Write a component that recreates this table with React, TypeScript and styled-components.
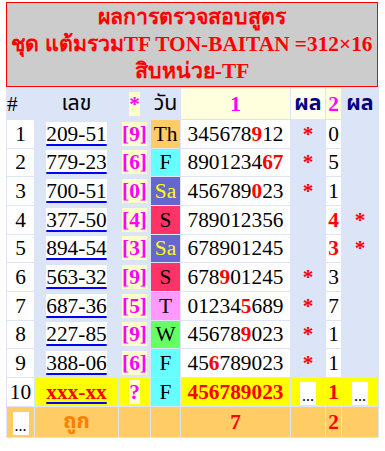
import styled, { createGlobalStyle } from "styled-components";

const GlobalStyle = createGlobalStyle`
  html, body {
    margin: 0;
    padding: 0;
    background: #ffffff;
  }
  body {
    font-family: "Liberation Serif", "Times New Roman", serif;
  }
`

const Page = styled.div`
  width: 373px;
  padding: 2px 0 0 6px;
`

const TitleBox = styled.div`
  border: 1px solid #ff0000;
  background: #cccccc;
  width: 370px;
  height: 82px;
  padding-top: 1px;
  box-sizing: content-box;
  display: flex;
  flex-direction: column;
  align-items: center;
`

const TitleLine = styled.div`
  color: #ff0000;
  font-weight: bold;
  font-size: 21.33px;
  line-height: 27px;
  white-space: nowrap;
`

const Table = styled.table`
  width: 373px;
  table-layout: fixed;
  border-collapse: separate;
  border-spacing: 1px;
  background: #dce4f8;
  font-size: 21.33px;
  line-height: 24px;
  margin-top: 0;

  td, th {
    padding: 0;
    text-align: center;
    vertical-align: middle;
    overflow: hidden;
    white-space: nowrap;
    line-height: 24px;
  }
`

const HeadRow = styled.tr`
  height: 31px;
`

const Row = styled.tr<{ $h?: number }>`
  height: ${p => p.$h ?? 27.67}px;
`

const Th = styled.th<{ $bg?: string; $color?: string; $bold?: boolean; $left?: boolean }>`
  background: ${p => p.$bg ?? "transparent"};
  color: ${p => p.$color ?? "#000"};
  font-weight: ${p => (p.$bold ? "bold" : "normal")};
  text-align: ${p => (p.$left ? "left" : "center")} !important;
  font-size: 21.33px;
`

const Td = styled.td<{ $bg?: string; $color?: string; $bold?: boolean }>`
  background: ${p => p.$bg ?? "transparent"};
  color: ${p => p.$color ?? "#000"};
  font-weight: ${p => (p.$bold ? "bold" : "normal")};
`

const NumLink = styled.span<{ $hot?: boolean }>`
  background: ${p => (p.$hot ? "transparent" : "#ffffff")};
  color: ${p => (p.$hot ? "#ff0000" : "#000")};
  font-weight: ${p => (p.$hot ? "bold" : "normal")};
  text-decoration: underline;
  text-decoration-color: #0000ff;
  text-decoration-thickness: 2px;
  text-underline-offset: 3px;
`

const Pick = styled.span`
  background: #ffffcc;
  color: #ff00ff;
  font-weight: bold;
`

const Hit = styled.b`
  color: #ff0000;
`

const Star = styled.span`
  color: #ff0000;
  font-weight: bold;
`

const Dots = styled.span`
  display: inline-block;
  background: #ffffff;
  color: #000;
  width: 16px;
  height: 23px;
  line-height: 28px;
  font-size: 16px;
  vertical-align: middle;
  overflow: hidden;
`

const Thai = styled.span<{ $color?: string }>`
  font-family: "Tahoma", "Noto Sans Thai", "DejaVu Sans", sans-serif;
  color: ${p => p.$color ?? "inherit"};
  line-height: 24px;
`

const days: Record<string, { bg: string; fg: string }> = {
  Th: { bg: "#ffcc66", fg: "#000" },
  F: { bg: "#66ffff", fg: "#000" },
  Sa: { bg: "#6666cc", fg: "#ffff00" },
  S: { bg: "#ff3366", fg: "#000" },
  T: { bg: "#ff99ff", fg: "#000" },
  W: { bg: "#66ff66", fg: "#000" },
}

type Item = {
  num: string
  pick: string
  day: string
  digits: [string, string, string]
  star: boolean
  second: string
  secondHot: boolean
}

const rows: Item[] = [
  { num: "209-51", pick: "[9]", day: "Th", digits: ["345678", "9", "12"], star: true, second: "0", secondHot: false },
  { num: "779-23", pick: "[6]", day: "F", digits: ["8901234", "67", ""], star: true, second: "5", secondHot: false },
  { num: "700-51", pick: "[0]", day: "Sa", digits: ["456789", "0", "23"], star: true, second: "1", secondHot: false },
  { num: "377-50", pick: "[4]", day: "S", digits: ["789012356", "", ""], star: false, second: "4", secondHot: true },
  { num: "894-54", pick: "[3]", day: "Sa", digits: ["678901245", "", ""], star: false, second: "3", secondHot: true },
  { num: "563-32", pick: "[9]", day: "S", digits: ["678", "9", "01245"], star: true, second: "3", secondHot: false },
  { num: "687-36", pick: "[5]", day: "T", digits: ["01234", "5", "689"], star: true, second: "7", secondHot: false },
  { num: "227-85", pick: "[9]", day: "W", digits: ["45678", "9", "023"], star: true, second: "1", secondHot: false },
  { num: "388-06", pick: "[6]", day: "F", digits: ["45", "6", "789023"], star: true, second: "1", secondHot: false },
]

export default function App() {
  return (
    <>
      <GlobalStyle />
      <Page>
        <TitleBox>
          <TitleLine>ผลการตรวจสอบสูตร</TitleLine>
          <TitleLine>ชุด แต้มรวมTF TON-BAITAN =312×16</TitleLine>
          <TitleLine>สิบหน่วย-TF</TitleLine>
        </TitleBox>
        <Table>
          <colgroup>
            <col style={{ width: 27 }} />
            <col style={{ width: 83 }} />
            <col style={{ width: 31 }} />
            <col style={{ width: 29 }} />
            <col style={{ width: 109 }} />
            <col style={{ width: 34 }} />
            <col style={{ width: 15 }} />
            <col style={{ width: 36 }} />
          </colgroup>
          <thead>
            <HeadRow>
              <Th $left>#</Th>
              <Th><Thai>เลข</Thai></Th>
              <Th><Pick>*</Pick></Th>
              <Th><Thai>วัน</Thai></Th>
              <Th $bg="#ffffdd" $color="#ff00ff" $bold>1</Th>
              <Th $bg="#ffffee" $color="#000080" $bold><Thai>ผล</Thai></Th>
              <Th $bg="#ffffdd" $color="#ff00ff" $bold>2</Th>
              <Th $color="#000080" $bold><Thai>ผล</Thai></Th>
            </HeadRow>
          </thead>
          <tbody>
            {rows.map((r, i) => (
              <Row key={r.num}>
                <Td $bg="#ffffff">{i + 1}</Td>
                <Td><NumLink>{r.num}</NumLink></Td>
                <Td><Pick>{r.pick}</Pick></Td>
                <Td $bg={days[r.day].bg} $color={days[r.day].fg}>{r.day}</Td>
                <Td $bg="#ffffff">
                  {r.digits[0]}
                  {r.digits[1] && <Hit>{r.digits[1]}</Hit>}
                  {r.digits[2]}
                </Td>
                <Td>{r.star && <Star>*</Star>}</Td>
                <Td $bg="#ffffff" $color={r.secondHot ? "#ff0000" : "#000"} $bold={r.secondHot}>{r.second}</Td>
                <Td>{r.secondHot && <Star>*</Star>}</Td>
              </Row>
            ))}
            <Row>
              <Td $bg="#ffffff">10</Td>
              <Td $bg="#ffff00"><NumLink $hot>xxx-xx</NumLink></Td>
              <Td $bg="#ffff00"><Pick>?</Pick></Td>
              <Td $bg={days.F.bg}>F</Td>
              <Td $bg="#ffff00" $color="#ff0000" $bold>456789023</Td>
              <Td $bg="#ffff00"><Dots>...</Dots></Td>
              <Td $bg="#ffff00" $color="#ff0000" $bold>1</Td>
              <Td $bg="#ffff00"><Dots>...</Dots></Td>
            </Row>
            <Row $h={30.67}>
              <Td $bg="#ffcc66"><Dots>...</Dots></Td>
              <Td $bg="#ffcc66" $bold><Thai $color="#ff8000">ถูก</Thai></Td>
              <Td $bg="#ffcc66" />
              <Td $bg="#ffcc66" />
              <Td $bg="#ffcc66" $color="#ff0000" $bold>7</Td>
              <Td $bg="#ffcc66" />
              <Td $bg="#ffcc66" $color="#ff0000" $bold>2</Td>
              <Td $bg="#ffcc66" />
            </Row>
          </tbody>
        </Table>
      </Page>
    </>
  )
}
